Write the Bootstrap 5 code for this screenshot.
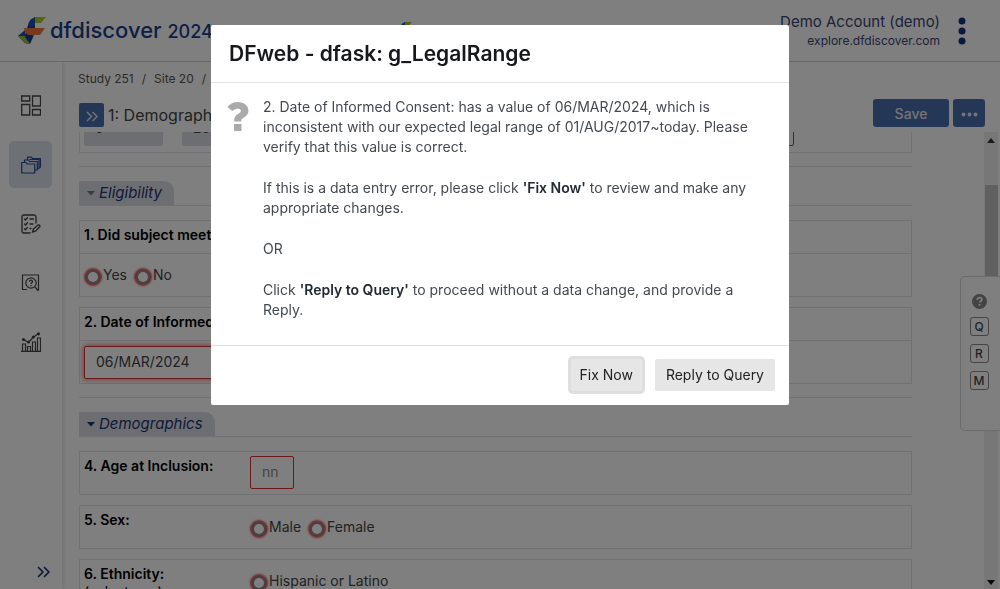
<!DOCTYPE html>
<html lang="en">
<head>
<meta charset="utf-8">
<meta name="viewport" content="width=device-width, initial-scale=1">
<title>DFdiscover 2024</title>
<link href="https://cdn.jsdelivr.net/npm/bootstrap@5.3.0/dist/css/bootstrap.min.css" rel="stylesheet">
<style>
  :root { --navy: #1c3474; --brand: #4a6fae; --line: #e2e3e6; --soft: #dadde2; --danger: #dc3038; }
  body { font-family: Inter, "Open Sans", sans-serif; font-size: 14px; line-height: 20px; color: #444; background: #fff; }
  .app { height: 100vh; }
  .topbar { height: 62px; border-bottom: 1px solid #d0d0d0; padding: 0 27px 0 18px; color: var(--navy); }
  .wordmark { font-size: 22px; line-height: 30px; font-weight: 500; color: #1a3f8c; }
  .wordmark small { font-size: 18px; }
  .sponsor { margin-left: 19%; }
  .account { gap: 15px; }
  .account-name { font-size: 15px; line-height: 20px; color: #3c4470; }
  .account-host { font-size: 12px; line-height: 18px; color: #3c4470; }
  .kebab { color: #142f80; }
  .rail { width: 62px; padding: 20px 10px 0 9px; box-shadow: 1px 0 4px rgba(0,0,0,.14); color: #444; }
  .rail-item { width: 43px; height: 47px; margin-bottom: 12px; border-radius: 5px; color: inherit; }
  .rail-item.active { background: #dbe1ea; color: #2b4a94; }
  .rail-more { color: var(--navy); margin-bottom: 11px; padding: 0 2px; }
  .crumbs { font-size: 12px; line-height: 18px; padding: 8px 0 7px 16px; --bs-breadcrumb-divider-color: #555; }
  .crumbs a { color: #555; text-decoration: none; }
  .crumbs .breadcrumb-item + .breadcrumb-item { padding-left: 8px; }
  .crumbs .breadcrumb-item + .breadcrumb-item::before { padding-right: 8px; color: #555; }
  .titlebar { padding: 0 15px 0 17px; height: 36px; }
  .page-title { font-size: 16px; line-height: 24px; color: #444; font-weight: 400; }
  .btn-brand { background: var(--brand); color: #e6e9ef; border: 0; border-radius: 3px; font-size: 14px; font-weight: 500; }
  .btn-toggle { width: 25px; height: 24px; border-radius: 2px; }
  .btn-save { width: 76px; height: 28px; }
  .btn-dots { width: 32px; height: 28px; }
  .sheet { padding: 0 72px 0 17px; }
  .peek { height: 21px; }
  .frame { border: 1px solid var(--line); }
  .frame + .frame { margin-top: 10px; }
  .prior { height: 60px; padding: 0 4px 6px; gap: 19px; }
  .prior .form-control { font-size: 14px; height: 34px; padding: 0 11px 4px; border: 0; border-radius: 2px; background: var(--soft); color: #444; }
  .prior .w-visit { width: 79px; }
  .prior .missing { border: 1px solid var(--danger); background: #fff; width: 160px; margin-right: 113px; }
  .rule { border-top: 1px solid var(--line); margin: 13px 0 14px; }
  .section-head { border-bottom: 1px solid var(--line); margin-bottom: 14px; }
  .section-tab { height: 24px; padding: 0 12px 0 8px; background: var(--soft); color: var(--navy); border: 0; border-radius: 0 10px 0 0; font-style: italic; font-size: 15px; }
  .question { font-size: 14px; font-weight: 600; color: #000; padding: 5px 4px; line-height: 18px; }
  .q-top { height: 33px; border-bottom: 1px solid var(--line); }
  .q-body { height: 42px; padding: 0 4px; }
  .q-side { min-height: 44px; }
  .q-side .question { width: 170px; }
  .q-choices { padding-top: 11px; }
  .choice { margin-right: 7px; font-size: 14px; line-height: 20px; color: #444; gap: 2px; }
  .choice input { appearance: none; width: 14px; height: 14px; margin: 5px 1px 0 2px; border: 2px solid #888; border-radius: 50%; background: #fff; box-shadow: 0 0 2px 2px rgba(220,48,56,.85); }
  .field { font-size: 14px; height: 33px; border: 1px solid var(--danger); border-radius: 2px; padding: 0 11px 2px; color: #444; background: #fff; }
  .field-date { width: 200px; box-shadow: 0 0 5px 1px rgba(220,48,56,.6); }
  .field-age { width: 44px; margin-top: 4px; }
  .field::placeholder { color: #888; opacity: 1; }
  .track { width: 14px; background: #eee; margin-right: 2px; }
  .thumb { height: 116px; margin: 42px 0 0 1px; background: #c1c1c1; }
  .arrow-up { margin-top: 6px; height: 5px; }
  .scroller { min-height: 0; margin-top: 1px; }
  .dock { top: 276px; right: 0; width: 40px; height: 155px; padding: 17px 3px 0 0; gap: 8px; border: 1px solid #d8d8d8; border-right: 0; border-radius: 5px 0 0 5px; background: #fff; }
  .dock-key { width: 19px; height: 19px; padding: 0; border: 1px solid #888; border-radius: 3px; background: #fff; color: #444; font-size: 12px; line-height: 17px; font-weight: 500; }
  .ask .modal-dialog { max-width: 578px; margin: 25px auto; }
  .ask .modal-content { border: 0; border-radius: 2px; color: #444a50; }
  .ask .modal-header { padding: 14px 18px; height: 58px; border-color: #dee2e6; }
  .ask .modal-title { font-size: 21px; line-height: 28px; font-weight: 600; color: #16181c; }
  .ask .modal-body { padding: 14px 36px 25px 16px; gap: 14px; }
  .ask .modal-body p { margin-bottom: 21px; }
  .ask .modal-body p:last-child { margin-bottom: 0; }
  .ask .modal-body b { font-weight: 600; color: #222a33; }
  .ask .modal-footer { padding: 13px 14px 14px; gap: 13px; border-color: #dee2e6; }
  .ask .modal-footer .btn { margin: 0; height: 32px; padding: 0 11px; font-size: 14px; line-height: 20px; border: 0; border-radius: 2px; background: #e6e6e6; color: #222; }
  .ask .modal-footer .btn-focus { padding: 0 9px; box-shadow: 0 0 0 3px #dedede; }
</style>
<script src="https://cdn.jsdelivr.net/npm/bootstrap@5.3.0/dist/js/bootstrap.bundle.min.js"></script>
</head>
<body class="overflow-hidden">
<svg class="d-none">
  <symbol id="logo" viewBox="0 0 28 28">
    <path d="M11 5 17 0v16l-5 5H6z" fill="#143c96"/>
    <path d="M17 0h11l-5 6h-8z" fill="#a6c82c"/>
    <path d="M12 3 17 0v9h-6z" fill="#1e50aa"/>
    <path d="M0 19 7 13v13z" fill="#1e50aa"/>
    <path d="M0 19h7l5 8H8z" fill="#96be32"/>
    <path d="m7 20 9-2-4 9z" fill="#143c96"/>
    <path d="M6 11h21l-5 7H10l-3-3z" fill="#f0743c"/>
  </symbol>
  <symbol id="chevrons" viewBox="0 0 12 11">
    <path d="m1 1 4.500 4.500L1 10M6.500 1 11 5.500 6.500 10" fill="none" stroke="currentColor" stroke-width="1.500"/>
  </symbol>
</svg>

<div class="app d-flex flex-column">
  <header class="topbar d-flex align-items-center flex-shrink-0">
    <div class="d-flex align-items-center gap-1">
      <svg width="28" height="28"><use href="#logo"/></svg>
      <span class="wordmark">dfdiscover <small>2024</small></span>
    </div>
    <svg class="sponsor" width="18" height="18"><use href="#logo"/></svg>
    <div class="account d-flex align-items-center ms-auto">
      <div class="text-end">
        <div class="account-name">Demo Account (demo)</div>
        <div class="account-host">explore.dfdiscover.com</div>
      </div>
      <button class="kebab btn border-0 p-0 lh-1" aria-label="Menu"><svg width="18" height="28" viewBox="0 0 18 28" fill="currentColor"><circle cx="7" cy="4" r="3.500"/><circle cx="7" cy="14" r="3.500"/><circle cx="7" cy="24" r="3.500"/></svg></button>
    </div>
  </header>

  <div class="d-flex flex-fill overflow-hidden">
    <nav class="rail d-flex flex-column flex-shrink-0" aria-label="Sections">
      <a href="#" class="rail-item d-flex align-items-center justify-content-center" aria-label="Dashboard"><svg width="20" height="21" viewBox="0 0 20 21" fill="none" stroke="currentColor" stroke-width="1.300"><path d="M.7 1h8v5h-8zM11.500 1h8v10h-8zM.7 9.500h8v10.500h-8zM11.500 14.500h8V20h-8z"/></svg></a>
      <a href="#" class="rail-item active d-flex align-items-center justify-content-center" aria-label="Records"><svg width="20" height="18" viewBox="0 0 20 18" fill="none" stroke="currentColor" stroke-width="1.200" stroke-linejoin="round"><path d="M.7 6.500h4.500l1 1.500h7.500v9h-13z"/><path d="M3.500 6.500V4h4l1 1.500h7.800V14h-2.600M6.500 4V1.200h4l1 1.500h8V11l-2 1.500h-1.200M8.500 3.500h9.500V12"/></svg></a>
      <a href="#" class="rail-item d-flex align-items-center justify-content-center" aria-label="Tasks"><svg width="20" height="20" viewBox="0 0 20 20" fill="none" stroke="currentColor" stroke-width="1.300" stroke-linecap="round"><path d="M15 9V3a2 2 0 0 0-2-2H3a2 2 0 0 0-2 2v14a2 2 0 0 0 2 2h6"/><path d="m3.500 5 1 1 2-2.300M9 5h3.500m-9 5 1 1 2-2.300M9 10h3m-8.500 4.700 1 1 2-2.300M9 14.500h1"/><path d="m11.500 18 .8-2.800 4.700-4.200q1.800-.4 2 1.400l-4.500 4.800z"/></svg></a>
      <a href="#" class="rail-item d-flex align-items-center justify-content-center" aria-label="Queries"><svg width="20" height="18" viewBox="0 0 20 18" fill="none" stroke="currentColor" stroke-width="1.200"><path d="M6 15.500H1.500V1h16v14.500H16"/><circle cx="10" cy="9" r="5.200"/><path d="m14 13 3.500 4"/><path d="M8.500 7.800q0-1.600 1.500-1.600t1.500 1.400q0 .7-.8 1.200t-.7 1.200M10 11v1.200"/></svg></a>
      <a href="#" class="rail-item d-flex align-items-center justify-content-center" aria-label="Reports"><svg width="20" height="20" viewBox="0 0 20 20" fill="none" stroke="currentColor" stroke-width="1.200"><path d="M0 19.400h20M1.500 19v-7h3v7m2 0v-4.500h3V19m2 0v-9h3v9m2 0V6h3v13"/><path d="m2.500 7.500 5 3 4.500-5 5.500-4"/><g fill="currentColor" stroke="none"><circle cx="2.500" cy="7.500" r="1.600"/><circle cx="7.500" cy="10" r="1.600"/><circle cx="12.300" cy="5" r="1.600"/><circle cx="17.500" cy="1.800" r="1.600"/></g></svg></a>
      <button class="rail-more btn border-0 mt-auto align-self-end lh-1" aria-label="Expand"><svg width="13" height="12"><use href="#chevrons"/></svg></button>
    </nav>

    <main class="d-flex flex-column flex-fill overflow-hidden">
      <nav aria-label="Breadcrumb">
        <ol class="breadcrumb crumbs mb-0">
          <li class="breadcrumb-item"><a href="#">Study 251</a></li>
          <li class="breadcrumb-item"><a href="#">Site 20</a></li>
          <li class="breadcrumb-item"><a href="#">Subject 20002</a></li>
        </ol>
      </nav>
      <div class="titlebar d-flex align-items-start gap-1 flex-shrink-0">
        <button class="btn btn-brand btn-toggle p-0 lh-1 mt-2" aria-label="Show list"><svg width="12" height="11"><use href="#chevrons"/></svg></button>
        <h1 class="page-title mb-0 mt-2 flex-fill">1: Demographics</h1>
        <button class="btn btn-brand btn-save p-0 mt-1">Save</button>
        <button class="btn btn-brand btn-dots p-0 mt-1 lh-1" aria-label="More"><svg width="17" height="5" viewBox="0 0 17 5" fill="currentColor"><circle cx="2.500" cy="2.500" r="1.900"/><circle cx="8.500" cy="2.500" r="1.900"/><circle cx="14.500" cy="2.500" r="1.900"/></svg></button>
      </div>

      <div class="scroller d-flex flex-fill">
        <div class="sheet flex-fill overflow-hidden">
          <div class="peek d-flex align-items-end overflow-hidden">
            <div class="frame prior d-flex align-items-end flex-fill">
              <input class="form-control w-visit" value="0" aria-label="Visit" readonly>
              <input class="form-control w-visit" value="20002" aria-label="Subject" readonly>
              <input class="form-control missing ms-auto" aria-label="Initials">
            </div>
          </div>
          <div class="rule"></div>

          <section>
            <div class="section-head d-flex"><button class="section-tab d-flex align-items-center gap-1"><svg width="8" height="5"><path d="M0 0h8L4 4.500z" fill="#777"/></svg>Eligibility</button></div>
            <fieldset class="frame">
              <div class="q-top question">1. Did subject meet all eligibility criteria?</div>
              <div class="q-body d-flex align-items-center">
                <label class="choice d-flex"><input type="radio" name="elig">Yes</label>
                <label class="choice d-flex"><input type="radio" name="elig">No</label>
              </div>
            </fieldset>
            <div class="frame">
              <label class="q-top question d-block" for="consent">2. Date of Informed Consent:</label>
              <div class="q-body d-flex align-items-center"><input id="consent" class="field field-date" value="06/MAR/2024"></div>
            </div>
          </section>
          <div class="rule"></div>

          <section>
            <div class="section-head d-flex"><button class="section-tab d-flex align-items-center gap-1"><svg width="8" height="5"><path d="M0 0h8L4 4.500z" fill="#1c3474"/></svg>Demographics</button></div>
            <div class="frame q-side d-flex align-items-start">
              <label class="question" for="age">4. Age at Inclusion:</label>
              <input id="age" class="field field-age" placeholder="nn">
            </div>
            <div class="frame q-side d-flex align-items-start">
              <div class="question">5. Sex:</div>
              <div class="q-choices d-flex">
                <label class="choice d-flex"><input type="radio" name="sex">Male</label>
                <label class="choice d-flex"><input type="radio" name="sex">Female</label>
              </div>
            </div>
            <div class="frame q-side d-flex align-items-start">
              <div class="question">6. Ethnicity:<div class="fw-normal">(select one)</div></div>
              <div class="q-choices d-flex">
                <label class="choice d-flex"><input type="radio" name="eth">Hispanic or Latino</label>
              </div>
            </div>
          </section>
        </div>
        <div class="track d-flex flex-column flex-shrink-0">
          <svg class="arrow-up align-self-center flex-shrink-0" width="8" height="5"><path d="M0 5h8L4 0z" fill="#333"/></svg>
          <div class="thumb"></div>
          <svg class="mt-auto mb-1 align-self-center flex-shrink-0" width="8" height="5"><path d="M0 0h8L4 5z" fill="#111"/></svg>
        </div>
      </div>
    </main>
  </div>
</div>

<aside class="dock position-fixed d-flex flex-column align-items-center" aria-label="Field tools">
  <svg width="15" height="15" viewBox="0 0 15 15"><circle cx="7.500" cy="7.500" r="7.500" fill="#888"/><path d="M5.200 5.800q.2-2.300 2.400-2.300 2.300.1 2.300 2 0 1-1.200 1.700-1 .5-1 1.300M7.600 10v1.700" fill="none" stroke="#fff" stroke-width="1.700"/></svg>
  <button class="dock-key">Q</button>
  <button class="dock-key">R</button>
  <button class="dock-key">M</button>
</aside>

<div class="modal-backdrop show"></div>
<div class="modal ask d-block" role="dialog" aria-modal="true" aria-labelledby="askTitle">
  <div class="modal-dialog">
    <div class="modal-content">
      <div class="modal-header"><h2 class="modal-title" id="askTitle">DFweb - dfask: g_LegalRange</h2></div>
      <div class="modal-body d-flex align-items-start">
        <svg class="flex-shrink-0 mt-1" width="22" height="32" viewBox="0 0 22 32" fill="#aaa"><path d="M.5 6Q4.500 1 11 1q10 .5 10.500 8.500 0 4.500-5.500 7.500-2 1.300-2 3.500H7.200q-.4-4.800 3.300-7.200 3.500-2 3.500-3.600-.3-2.200-3-2.300Q8.500 7.300 5.200 10z"/><path d="M7 23h7.500v7H7z"/></svg>
        <div>
          <p>2. Date of Informed Consent: has a value of 06/MAR/2024, which is inconsistent with our expected legal range of 01/AUG/2017~today. Please verify that this value is correct.</p>
          <p>If this is a data entry error, please click <b>'Fix Now'</b> to review and make any appropriate changes.</p>
          <p>OR</p>
          <p>Click <b>'Reply to Query'</b> to proceed without a data change, and provide a Reply.</p>
        </div>
      </div>
      <div class="modal-footer"><button class="btn btn-focus">Fix Now</button><button class="btn">Reply to Query</button></div>
    </div>
  </div>
</div>
</body>
</html>
